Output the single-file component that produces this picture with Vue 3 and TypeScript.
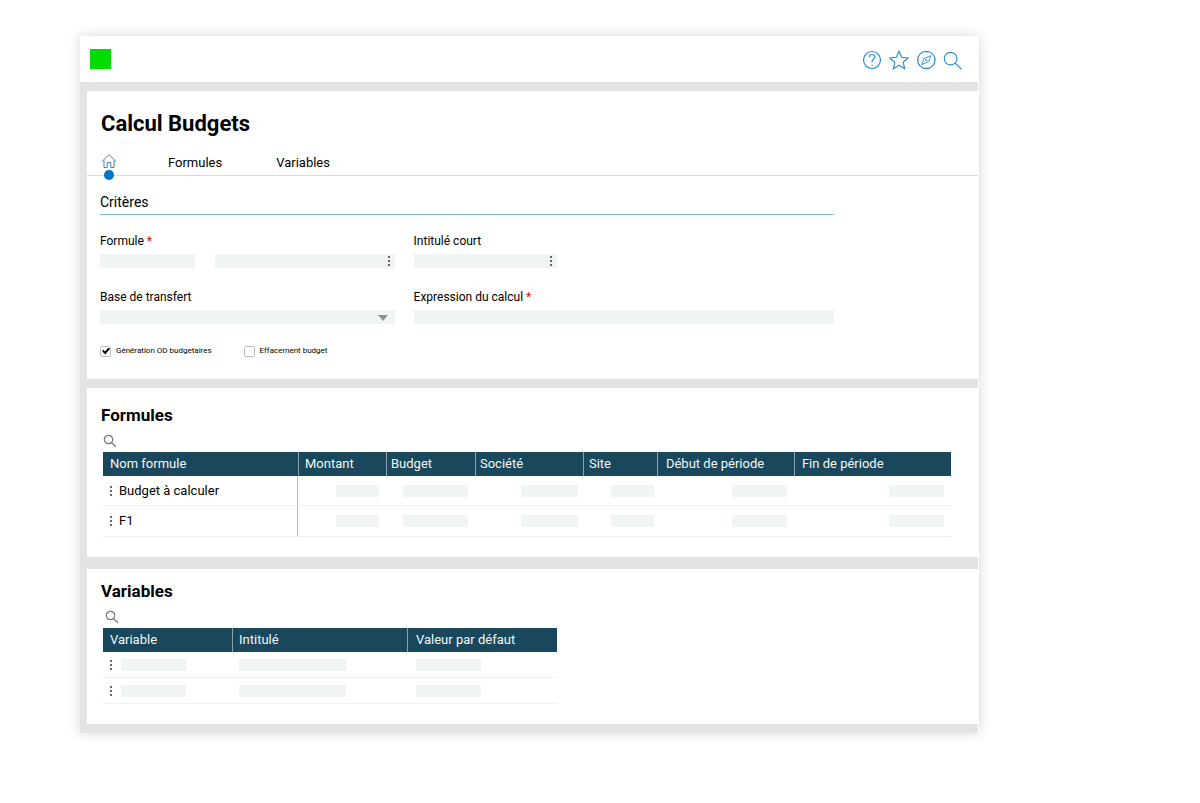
<script setup lang="ts">
import { ref } from 'vue'

interface Column {
  label: string
  weight: number
  key: string
}

const formulaColumns: Column[] = [
  { label: 'Nom formule', weight: 195, key: 'name' },
  { label: 'Montant', weight: 88, key: 'amount' },
  { label: 'Budget', weight: 89, key: 'budget' },
  { label: 'Société', weight: 108, key: 'company' },
  { label: 'Site', weight: 74, key: 'site' },
  { label: 'Début de période', weight: 137, key: 'start' },
  { label: 'Fin de période', weight: 157, key: 'end' },
]
const formulaRows: string[] = ['Budget à calculer', 'F1']

const variableColumns: Column[] = [
  { label: 'Variable', weight: 129, key: 'variable' },
  { label: 'Intitulé', weight: 175, key: 'title' },
  { label: 'Valeur par défaut', weight: 150, key: 'default' },
]
const variableRows: number[] = [1, 2]

function share(columns: Column[], column: Column): string {
  const total = columns.reduce((sum, c) => sum + c.weight, 0)
  return `${(column.weight / total) * 100}%`
}

const generateEntries = ref(true)
const clearBudget = ref(false)
const code = ref('')
const formula = ref('')
const shortTitle = ref('')
const base = ref('')
const expression = ref('')
</script>

<template>
  <div class="page">
    <div class="window">
      <header class="topbar">
        <div class="logo"></div>
        <nav class="tools" aria-label="Outils">
          <button type="button" aria-label="Aide">
            <svg width="20" height="20" viewBox="0 0 20 20">
              <circle cx="10" cy="10" r="8.5" />
              <path d="M7.2 7.3C7.2 5.5 8.4 4.5 10 4.5s2.8 1 2.8 2.6c0 2.1-2.7 2.3-2.7 4.3v1.2" />
              <path d="M10.1 14.5v1.3" />
            </svg>
          </button>
          <button type="button" aria-label="Favoris">
            <svg width="20" height="20" viewBox="0 0 20 20">
              <path d="M10 1.3l2.6 6 6.5.6-4.9 4.4 1.5 6.4-5.7-3.4-5.7 3.4 1.5-6.4L.9 7.9l6.5-.6z" />
            </svg>
          </button>
          <button type="button" aria-label="Navigation">
            <svg width="20" height="20" viewBox="0 0 20 20">
              <circle cx="10.3" cy="10" r="8.7" />
              <g class="needle">
                <path d="M14.8 5.6L12.8 11.6 5.8 14.6 7.8 8.6z" />
                <circle cx="10.3" cy="10.1" r="0.8" />
                <path d="M10.3 1.5v1.3M10.3 17.2v1.3M1.8 10h1.3M17.5 10h1.3" />
              </g>
            </svg>
          </button>
          <button type="button" aria-label="Rechercher">
            <svg width="20" height="20" viewBox="0 0 20 20">
              <circle cx="7.6" cy="8.6" r="6.3" />
              <path d="M12.100 13.100L18.500 19.200" />
            </svg>
          </button>
        </nav>
      </header>

      <main class="body">
        <section class="card criteria">
          <h1>Calcul Budgets</h1>
          <nav class="tabs" aria-label="Sections">
            <a class="home" href="#criteres" aria-label="Accueil">
              <svg width="16" height="16" viewBox="0 0 16 16">
                <path d="M1 8.5L8 1.7l7 6.8M3 7.500V14.500H6.200V9.500H9.800V14.500H13V7.500" />
              </svg>
            </a>
            <a class="to-formulas" href="#formules">Formules</a>
            <a href="#variables">Variables</a>
          </nav>

          <form id="criteres" @submit.prevent>
            <h3>Critères</h3>
            <div class="grid">
              <div class="field">
                <label for="code">Formule <span class="required">*</span></label>
                <div class="pair">
                  <input id="code" v-model="code" class="box" type="text" />
                  <div class="with-menu">
                    <input v-model="formula" class="box" type="text" aria-label="Intitulé de la formule" />
                    <button type="button" class="dots" aria-label="Actions"><i></i><i></i><i></i></button>
                  </div>
                </div>
              </div>
              <div class="field">
                <label for="short-title">Intitulé court</label>
                <div class="with-menu third">
                  <input id="short-title" v-model="shortTitle" class="box" type="text" />
                  <button type="button" class="dots" aria-label="Actions"><i></i><i></i><i></i></button>
                </div>
              </div>
              <div class="field">
                <label for="base">Base de transfert</label>
                <div class="drop">
                  <select id="base" v-model="base" class="box"><option value=""></option></select>
                  <svg width="10" height="6" viewBox="0 0 10 6"><path d="M0 0h10L5 6z" /></svg>
                </div>
              </div>
              <div class="field">
                <label for="expression">Expression du calcul <span class="required">*</span></label>
                <input id="expression" v-model="expression" class="box" type="text" />
              </div>
            </div>
            <div class="checks">
              <label><input v-model="generateEntries" type="checkbox" />Génération OD budgetaires</label>
              <label><input v-model="clearBudget" type="checkbox" />Effacement budget</label>
            </div>
          </form>
        </section>

        <section id="formules" class="card formulas">
          <h2>Formules</h2>
          <button type="button" class="find" aria-label="Rechercher une formule">
            <svg width="14" height="14" viewBox="0 0 14 14">
              <circle cx="5.5" cy="5.5" r="4.2" />
              <path d="M8.700 8.700L13 12.800" />
            </svg>
          </button>
          <table>
            <colgroup>
              <col v-for="c in formulaColumns" :key="c.key" :style="{ width: share(formulaColumns, c) }" />
            </colgroup>
            <thead>
              <tr>
                <th v-for="c in formulaColumns" :key="c.key" :class="c.key">{{ c.label }}</th>
              </tr>
            </thead>
            <tbody>
              <tr v-for="row in formulaRows" :key="row">
                <td v-for="c in formulaColumns" :key="c.key" :class="c.key">
                  <div v-if="c.key === 'name'" class="entry">
                    <button type="button" class="dots" aria-label="Actions"><i></i><i></i><i></i></button>
                    <span>{{ row }}</span>
                  </div>
                  <div v-else class="bar"></div>
                </td>
              </tr>
            </tbody>
          </table>
        </section>

        <section id="variables" class="card variables">
          <h2>Variables</h2>
          <button type="button" class="find" aria-label="Rechercher une variable">
            <svg width="14" height="14" viewBox="0 0 14 14">
              <circle cx="5.5" cy="5.5" r="4.2" />
              <path d="M8.700 8.700L13 12.800" />
            </svg>
          </button>
          <table>
            <colgroup>
              <col v-for="c in variableColumns" :key="c.key" :style="{ width: share(variableColumns, c) }" />
            </colgroup>
            <thead>
              <tr>
                <th v-for="c in variableColumns" :key="c.key" :class="c.key">{{ c.label }}</th>
              </tr>
            </thead>
            <tbody>
              <tr v-for="row in variableRows" :key="row">
                <td v-for="c in variableColumns" :key="c.key" :class="c.key">
                  <div class="entry">
                    <button v-if="c.key === 'variable'" type="button" class="dots" aria-label="Actions">
                      <i></i><i></i><i></i>
                    </button>
                    <div class="bar"></div>
                  </div>
                </td>
              </tr>
            </tbody>
          </table>
        </section>
      </main>
    </div>
  </div>
</template>

<style>
body {
  background: #fff;
}
</style>

<style scoped>
* {
  box-sizing: border-box;
}
.page {
  padding: 36px 221px 71px 80px;
  font-family: Roboto, 'Liberation Sans', sans-serif;
  font-size: 13px;
  line-height: 16px;
  color: #000;
}
.window {
  background: #fff;
  padding-right: 1px;
  box-shadow: 0 0 12px rgba(0, 0, 0, 0.16);
}
h1,
h2,
h3 {
  margin: 0;
}
button {
  border: 0;
  padding: 0;
  background: none;
  cursor: pointer;
}
svg {
  display: block;
  fill: none;
}
.topbar {
  display: flex;
  align-items: center;
  justify-content: space-between;
  height: 46px;
  padding: 0 15px 0 10px;
}
.logo {
  width: 21px;
  height: 20px;
  background: #00dc00;
}
.tools {
  display: flex;
  gap: 7px;
  padding-top: 2px;
}
.tools svg {
  stroke: #2f8fd3;
  stroke-width: 1.2;
}
.needle {
  stroke-width: 0.9;
}
.body {
  background: #e3e3e1;
  padding: 9px 0 9px 7px;
}
.card {
  background: #fff;
}
h1 {
  font-size: 22px;
  line-height: 28px;
  padding: 19px 14px 0;
}
h2 {
  font-size: 17px;
  line-height: 20px;
}
.tabs {
  display: flex;
  align-items: center;
  height: 38px;
  padding: 12px 14px 0;
  border-bottom: 1px solid #dcdcdc;
}
.tabs a {
  color: inherit;
  text-decoration: none;
}
.home {
  position: relative;
  margin-right: 51px;
}
.home svg {
  margin-bottom: 4px;
  stroke: #3d82bd;
}
.home::after {
  content: '';
  position: absolute;
  left: 3px;
  bottom: -7px;
  width: 10px;
  height: 10px;
  border-radius: 50%;
  background: #0077c8;
}
.to-formulas {
  margin-right: 54px;
}
form {
  padding: 16px 144px 22px 13px;
}
h3 {
  font-size: 14px;
  font-weight: 400;
  line-height: 20px;
  padding-bottom: 2px;
  border-bottom: 1px solid #7db9e0;
}
.grid {
  display: grid;
  grid-template-columns: 295fr 421fr;
  gap: 21px 19px;
  padding-top: 18px;
}
.field label {
  display: block;
  margin-bottom: 5px;
  font-size: 12px;
}
.required {
  color: #f00;
}
.box {
  display: block;
  width: 100%;
  height: 14px;
  margin: 0;
  padding: 0 4px;
  border: 0;
  border-radius: 0;
  background: #f1f4f5;
  font: inherit;
  font-size: 11px;
  appearance: none;
}
.pair {
  display: grid;
  grid-template-columns: 95fr 180fr;
  gap: 20px;
}
.with-menu,
.drop {
  position: relative;
}
.third {
  width: 34%;
}
.with-menu .dots {
  position: absolute;
  right: 4px;
  top: 2px;
}
.drop svg {
  position: absolute;
  right: 7px;
  top: 5px;
  fill: #919191;
  pointer-events: none;
}
.dots {
  display: flex;
  flex-direction: column;
  gap: 2px;
  width: 3px;
  flex: none;
}
.dots i {
  width: 2px;
  height: 2px;
  background: #666;
}
.checks {
  display: flex;
  gap: 32px;
  padding-top: 21px;
  font-size: 8px;
  line-height: 12px;
}
.checks label {
  display: flex;
  align-items: center;
  gap: 5px;
}
.checks input {
  position: relative;
  width: 11px;
  height: 11px;
  margin: 0;
  border: 1px solid #bdbdbd;
  border-radius: 2px;
  background: #fff;
  appearance: none;
}
.checks input:checked::after {
  content: '';
  position: absolute;
  left: 1px;
  top: 1px;
  width: 8px;
  height: 7px;
  background: #000;
  clip-path: polygon(0 50%, 18% 32%, 38% 56%, 82% 0, 100% 18%, 40% 100%);
}
.formulas {
  margin-top: 9px;
  padding: 17px 27px 20px 16px;
}
.variables {
  margin-top: 12px;
  padding: 12px 27px 20px 16px;
}
.card h2 {
  margin-left: -2px;
}
.find {
  display: block;
  margin: 9px 0 4px;
}
.variables .find {
  margin-left: 2px;
}
.find svg {
  stroke: #777;
  stroke-width: 1.2;
}
table {
  width: 100%;
  table-layout: fixed;
  border-collapse: separate;
  border-spacing: 0;
}
.variables table {
  width: 454px;
  max-width: 100%;
}
th {
  height: 24px;
  padding: 0 0 0 7px;
  background: #19475b;
  color: #f4f7f8;
  font-weight: 400;
  text-align: left;
  white-space: nowrap;
}
th + th {
  border-left: 1px solid #8ba3ad;
}
th.amount,
th.title {
  padding-left: 6px;
}
th.budget,
th.company {
  padding-left: 4px;
}
th.site {
  padding-left: 5px;
}
th.start,
th.default {
  padding-left: 8px;
}
td {
  height: 31px;
  padding: 0 7px;
  border-bottom: 1px solid #eeefef;
}
tr:first-child td {
  height: 30px;
}
td.name {
  padding: 0 0 0 7px;
  border-right: 1px solid #b5c1c7;
}
.entry {
  display: flex;
  align-items: center;
  gap: 6px;
}
.bar {
  width: 57px;
  height: 12px;
  margin-left: auto;
  background: #f1f4f5;
}
.amount .bar,
.site .bar {
  width: 43px;
}
.budget .bar {
  width: 65px;
}
.start .bar,
.end .bar {
  width: 55px;
}
td.company {
  padding-right: 5px;
}
td.site {
  padding-right: 3px;
}
.variables tbody td {
  height: 26px;
  padding: 0 7px;
}
.variables .entry {
  gap: 8px;
}
.variables .bar {
  width: 65px;
  margin-left: 0;
}
.variables .title .bar {
  width: 107px;
}
.variables td.default {
  padding-left: 9px;
}
</style>
